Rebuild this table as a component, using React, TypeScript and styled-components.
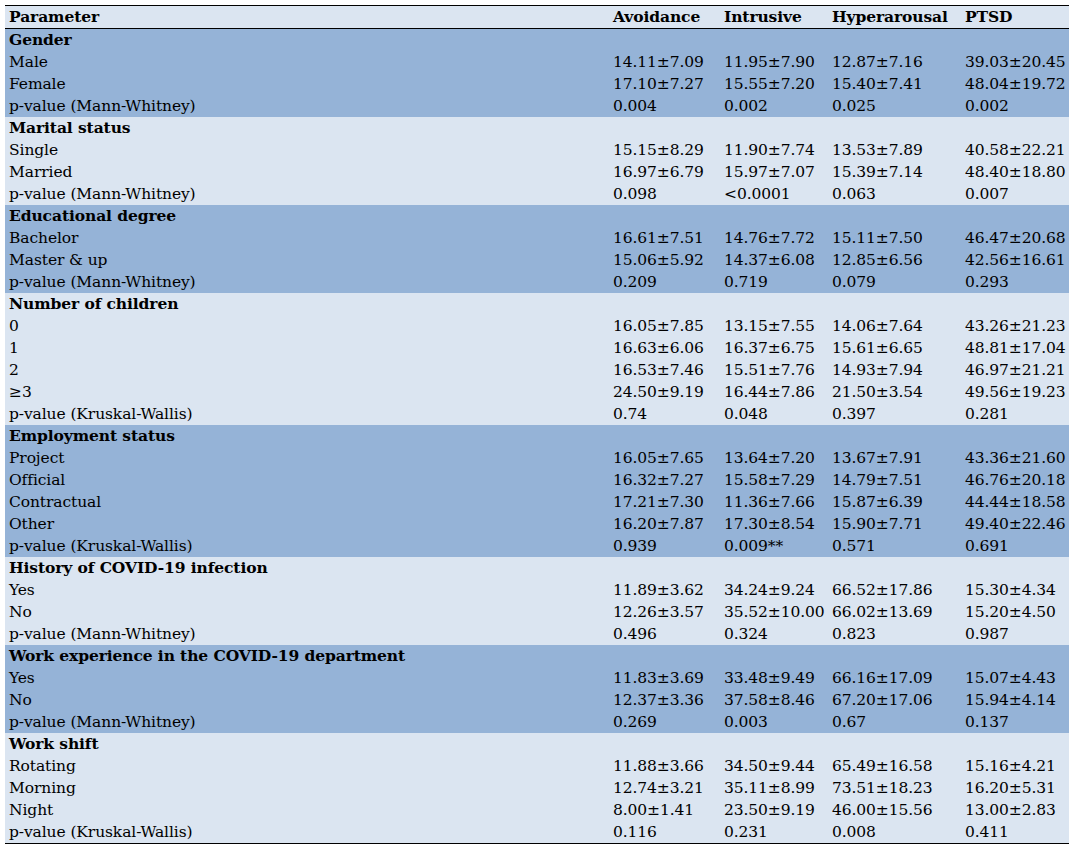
import React from 'react';
import styled, { createGlobalStyle } from 'styled-components';

type Tone = 'light' | 'dark';

type Group = {
  title: string;
  rows: [string, string, string, string, string][];
};

const GROUPS: Group[] = [
  {
    title: 'Gender',
    rows: [
      ['Male', '14.11±7.09', '11.95±7.90', '12.87±7.16', '39.03±20.45'],
      ['Female', '17.10±7.27', '15.55±7.20', '15.40±7.41', '48.04±19.72'],
      ['p-value (Mann-Whitney)', '0.004', '0.002', '0.025', '0.002'],
    ],
  },
  {
    title: 'Marital status',
    rows: [
      ['Single', '15.15±8.29', '11.90±7.74', '13.53±7.89', '40.58±22.21'],
      ['Married', '16.97±6.79', '15.97±7.07', '15.39±7.14', '48.40±18.80'],
      ['p-value (Mann-Whitney)', '0.098', '<0.0001', '0.063', '0.007'],
    ],
  },
  {
    title: 'Educational degree',
    rows: [
      ['Bachelor', '16.61±7.51', '14.76±7.72', '15.11±7.50', '46.47±20.68'],
      ['Master & up', '15.06±5.92', '14.37±6.08', '12.85±6.56', '42.56±16.61'],
      ['p-value (Mann-Whitney)', '0.209', '0.719', '0.079', '0.293'],
    ],
  },
  {
    title: 'Number of children',
    rows: [
      ['0', '16.05±7.85', '13.15±7.55', '14.06±7.64', '43.26±21.23'],
      ['1', '16.63±6.06', '16.37±6.75', '15.61±6.65', '48.81±17.04'],
      ['2', '16.53±7.46', '15.51±7.76', '14.93±7.94', '46.97±21.21'],
      ['≥3', '24.50±9.19', '16.44±7.86', '21.50±3.54', '49.56±19.23'],
      ['p-value (Kruskal-Wallis)', '0.74', '0.048', '0.397', '0.281'],
    ],
  },
  {
    title: 'Employment status',
    rows: [
      ['Project', '16.05±7.65', '13.64±7.20', '13.67±7.91', '43.36±21.60'],
      ['Official', '16.32±7.27', '15.58±7.29', '14.79±7.51', '46.76±20.18'],
      ['Contractual', '17.21±7.30', '11.36±7.66', '15.87±6.39', '44.44±18.58'],
      ['Other', '16.20±7.87', '17.30±8.54', '15.90±7.71', '49.40±22.46'],
      ['p-value (Kruskal-Wallis)', '0.939', '0.009**', '0.571', '0.691'],
    ],
  },
  {
    title: 'History of COVID-19 infection',
    rows: [
      ['Yes', '11.89±3.62', '34.24±9.24', '66.52±17.86', '15.30±4.34'],
      ['No', '12.26±3.57', '35.52±10.00', '66.02±13.69', '15.20±4.50'],
      ['p-value (Mann-Whitney)', '0.496', '0.324', '0.823', '0.987'],
    ],
  },
  {
    title: 'Work experience in the COVID-19 department',
    rows: [
      ['Yes', '11.83±3.69', '33.48±9.49', '66.16±17.09', '15.07±4.43'],
      ['No', '12.37±3.36', '37.58±8.46', '67.20±17.06', '15.94±4.14'],
      ['p-value (Mann-Whitney)', '0.269', '0.003', '0.67', '0.137'],
    ],
  },
  {
    title: 'Work shift',
    rows: [
      ['Rotating', '11.88±3.66', '34.50±9.44', '65.49±16.58', '15.16±4.21'],
      ['Morning', '12.74±3.21', '35.11±8.99', '73.51±18.23', '16.20±5.31'],
      ['Night', '8.00±1.41', '23.50±9.19', '46.00±15.56', '13.00±2.83'],
      ['p-value (Kruskal-Wallis)', '0.116', '0.231', '0.008', '0.411'],
    ],
  },
];

const HEADERS = ['Parameter', 'Avoidance', 'Intrusive', 'Hyperarousal', 'PTSD'];

const GlobalStyle = createGlobalStyle`
  html, body {
    margin: 0;
    padding: 0;
    background: #ffffff;
  }
  body {
    font-family: "DejaVu Serif", "Liberation Serif", serif;
    color: #000000;
  }
`;

const Page = styled.div`
  padding: 5px 8px 6px 5px;
`;

const Table = styled.div`
  width: 1064px;
  border-top: 1px solid #000000;
  border-bottom: 1px solid #000000;
`;

const Row = styled.div<{ $tone: Tone; $head?: boolean }>`
  display: grid;
  grid-template-columns: 604px 111px 108px 133px 108px;
  height: 22px;
  line-height: 22px;
  background: ${({ $tone }) => ($tone === 'dark' ? '#95b3d7' : '#dbe5f1')};
  border-bottom: ${({ $head }) => ($head ? '1px solid #000000' : 'none')};
  font-size: 15.5px;
  font-weight: ${({ $head }) => ($head ? 700 : 400)};
  letter-spacing: -0.1px;
`;

const Cell = styled.div<{ $bold?: boolean }>`
  padding-left: 4px;
  white-space: nowrap;
  font-weight: ${({ $bold }) => ($bold ? 700 : 'inherit')};
`;

const GroupBlock = ({ group, tone }: { group: Group; tone: Tone }) => (
  <>
    <Row $tone={tone}>
      <Cell $bold>{group.title}</Cell>
      <Cell />
      <Cell />
      <Cell />
      <Cell />
    </Row>
    {group.rows.map((row) => (
      <Row key={group.title + row[0]} $tone={tone}>
        {row.map((value, i) => (
          <Cell key={i}>{value}</Cell>
        ))}
      </Row>
    ))}
  </>
);

const App = () => {
  return (
    <Page>
      <GlobalStyle />
      <Table>
        <Row $tone="light" $head>
          {HEADERS.map((h) => (
            <Cell key={h}>{h}</Cell>
          ))}
        </Row>
        {GROUPS.map((group, index) => (
          <GroupBlock key={group.title} group={group} tone={index % 2 === 0 ? 'dark' : 'light'} />
        ))}
      </Table>
    </Page>
  );
};

export default App;
